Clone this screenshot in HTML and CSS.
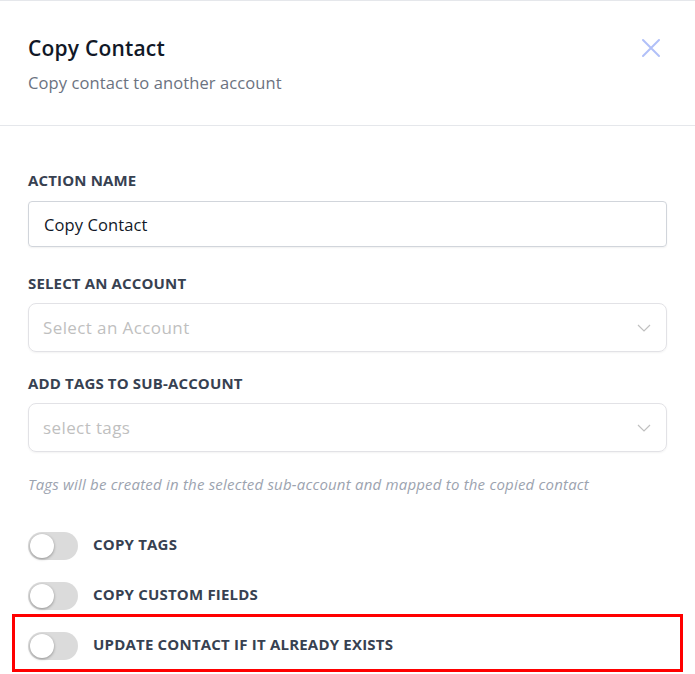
FILE: index.html
```html
<!DOCTYPE html>
<html>
<head>
<meta charset="utf-8">
<link rel="stylesheet" href="styles.css">
</head>
<body>
<div class="panel">
  <header class="head">
    <div class="head-text">
      <h1 class="title">Copy Contact</h1>
      <p class="subtitle">Copy contact to another account</p>
    </div>
    <button class="close" aria-label="Close">
      <svg width="20" height="20" viewBox="0 0 20 20"><path d="M2 2L18 18M18 2L2 18" stroke="#b1c0f8" stroke-width="2" stroke-linecap="round"/></svg>
    </button>
  </header>
  <main class="body">
    <label class="label">ACTION NAME</label>
    <div class="input">Copy Contact</div>

    <label class="label">SELECT AN ACCOUNT</label>
    <div class="select">
      <span class="placeholder">Select an Account</span>
      <svg class="chev" width="14" height="8" viewBox="0 0 14 8"><path d="M1 1L7 7L13 1" fill="none" stroke="#c0c0c0" stroke-width="1.2"/></svg>
    </div>

    <label class="label">ADD TAGS TO SUB-ACCOUNT</label>
    <div class="select last">
      <span class="placeholder">select tags</span>
      <svg class="chev" width="14" height="8" viewBox="0 0 14 8"><path d="M1 1L7 7L13 1" fill="none" stroke="#c0c0c0" stroke-width="1.2"/></svg>
    </div>
    <p class="help">Tags will be created in the selected sub-account and mapped to the copied contact</p>

    <div class="toggles">
      <div class="row"><span class="switch"><span class="knob"></span></span><span class="row-label">COPY TAGS</span></div>
      <div class="row"><span class="switch"><span class="knob"></span></span><span class="row-label">COPY CUSTOM FIELDS</span></div>
      <div class="row highlight"><span class="switch"><span class="knob"></span></span><span class="row-label">UPDATE CONTACT IF IT ALREADY EXISTS</span></div>
    </div>
  </main>
</div>
</body>
</html>
```

FILE: styles.css
```css
*, *::before, *::after { box-sizing: border-box; }
html, body { margin: 0; padding: 0; background: #fff; }
body {
  font-family: "Open Sans", "Noto Sans", sans-serif;
  color: #111827;
  width: 695px;
  height: 674px;
  overflow: hidden;
}
.panel {
  border-top: 1px solid #e5e7eb;
}
.head {
  display: flex;
  justify-content: space-between;
  align-items: flex-start;
  padding: 33px 28px 30px 28px;
  border-bottom: 1px solid #e5e7eb;
}
.title {
  margin: 0;
  font-size: 21px;
  line-height: 28px;
  font-weight: 600;
  color: #111827;
  letter-spacing: 0.2px;
}
.subtitle {
  margin: 9px 0 0 0;
  font-size: 16.5px;
  line-height: 24px;
  color: #6b7280;
  letter-spacing: 0.1px;
}
.close {
  border: 0;
  background: none;
  padding: 0;
  margin: 4px 6px 0 0;
  width: 20px;
  height: 20px;
  cursor: pointer;
}
.body {
  padding: 44px 28px 0 28px;
  display: flex;
  flex-direction: column;
}
.label {
  font-size: 15px;
  line-height: 20px;
  font-weight: 700;
  color: #374151;
  margin-bottom: 10px;
  letter-spacing: 0.15px;
}
.input {
  height: 46px;
  margin-top: 1px;
  border: 1px solid #d1d5db;
  border-radius: 4px;
  box-shadow: 0 1px 2px rgba(0,0,0,0.06);
  padding: 0 15px;
  display: flex;
  align-items: center;
  font-size: 16.5px;
  color: #111827;
  margin-bottom: 26px;
  letter-spacing: 0.1px;
}
.select {
  height: 49px;
  border: 1px solid #e2e2e6;
  border-radius: 8px;
  box-shadow: 0 1px 2px rgba(0,0,0,0.05);
  padding: 0 14px 0 14px;
  display: flex;
  align-items: center;
  justify-content: space-between;
  margin-bottom: 21px;
}
.select.last { margin-bottom: 22px; }
.placeholder {
  font-size: 17px;
  color: #bfbfbf;
  letter-spacing: 0.4px;
}
.chev { margin-right: 1px; }
.help {
  margin: 0 0 38px 0;
  font-size: 15px;
  line-height: 20px;
  font-style: italic;
  color: #9ca3af;
  letter-spacing: 0.2px;
}
.toggles {
  display: flex;
  flex-direction: column;
  gap: 22px;
}
.row {
  display: flex;
  align-items: center;
  gap: 15px;
  height: 28px;
  position: relative;
}
.switch {
  width: 50px;
  height: 28px;
  border-radius: 14px;
  background: #dbdbdb;
  position: relative;
  flex: none;
}
.knob {
  position: absolute;
  left: 2px;
  top: 2px;
  width: 24px;
  height: 24px;
  border-radius: 50%;
  background: #fff;
  box-shadow: 0 1px 3px rgba(0,0,0,0.35);
}
.row-label {
  font-size: 15px;
  line-height: 20px;
  font-weight: 700;
  color: #374151;
  letter-spacing: 0.2px;
  padding-bottom: 4px;
}
.highlight::after {
  content: "";
  position: absolute;
  left: -16px;
  top: -18px;
  width: 671px;
  height: 58px;
  border: 3px solid #ff0000;
}
```
